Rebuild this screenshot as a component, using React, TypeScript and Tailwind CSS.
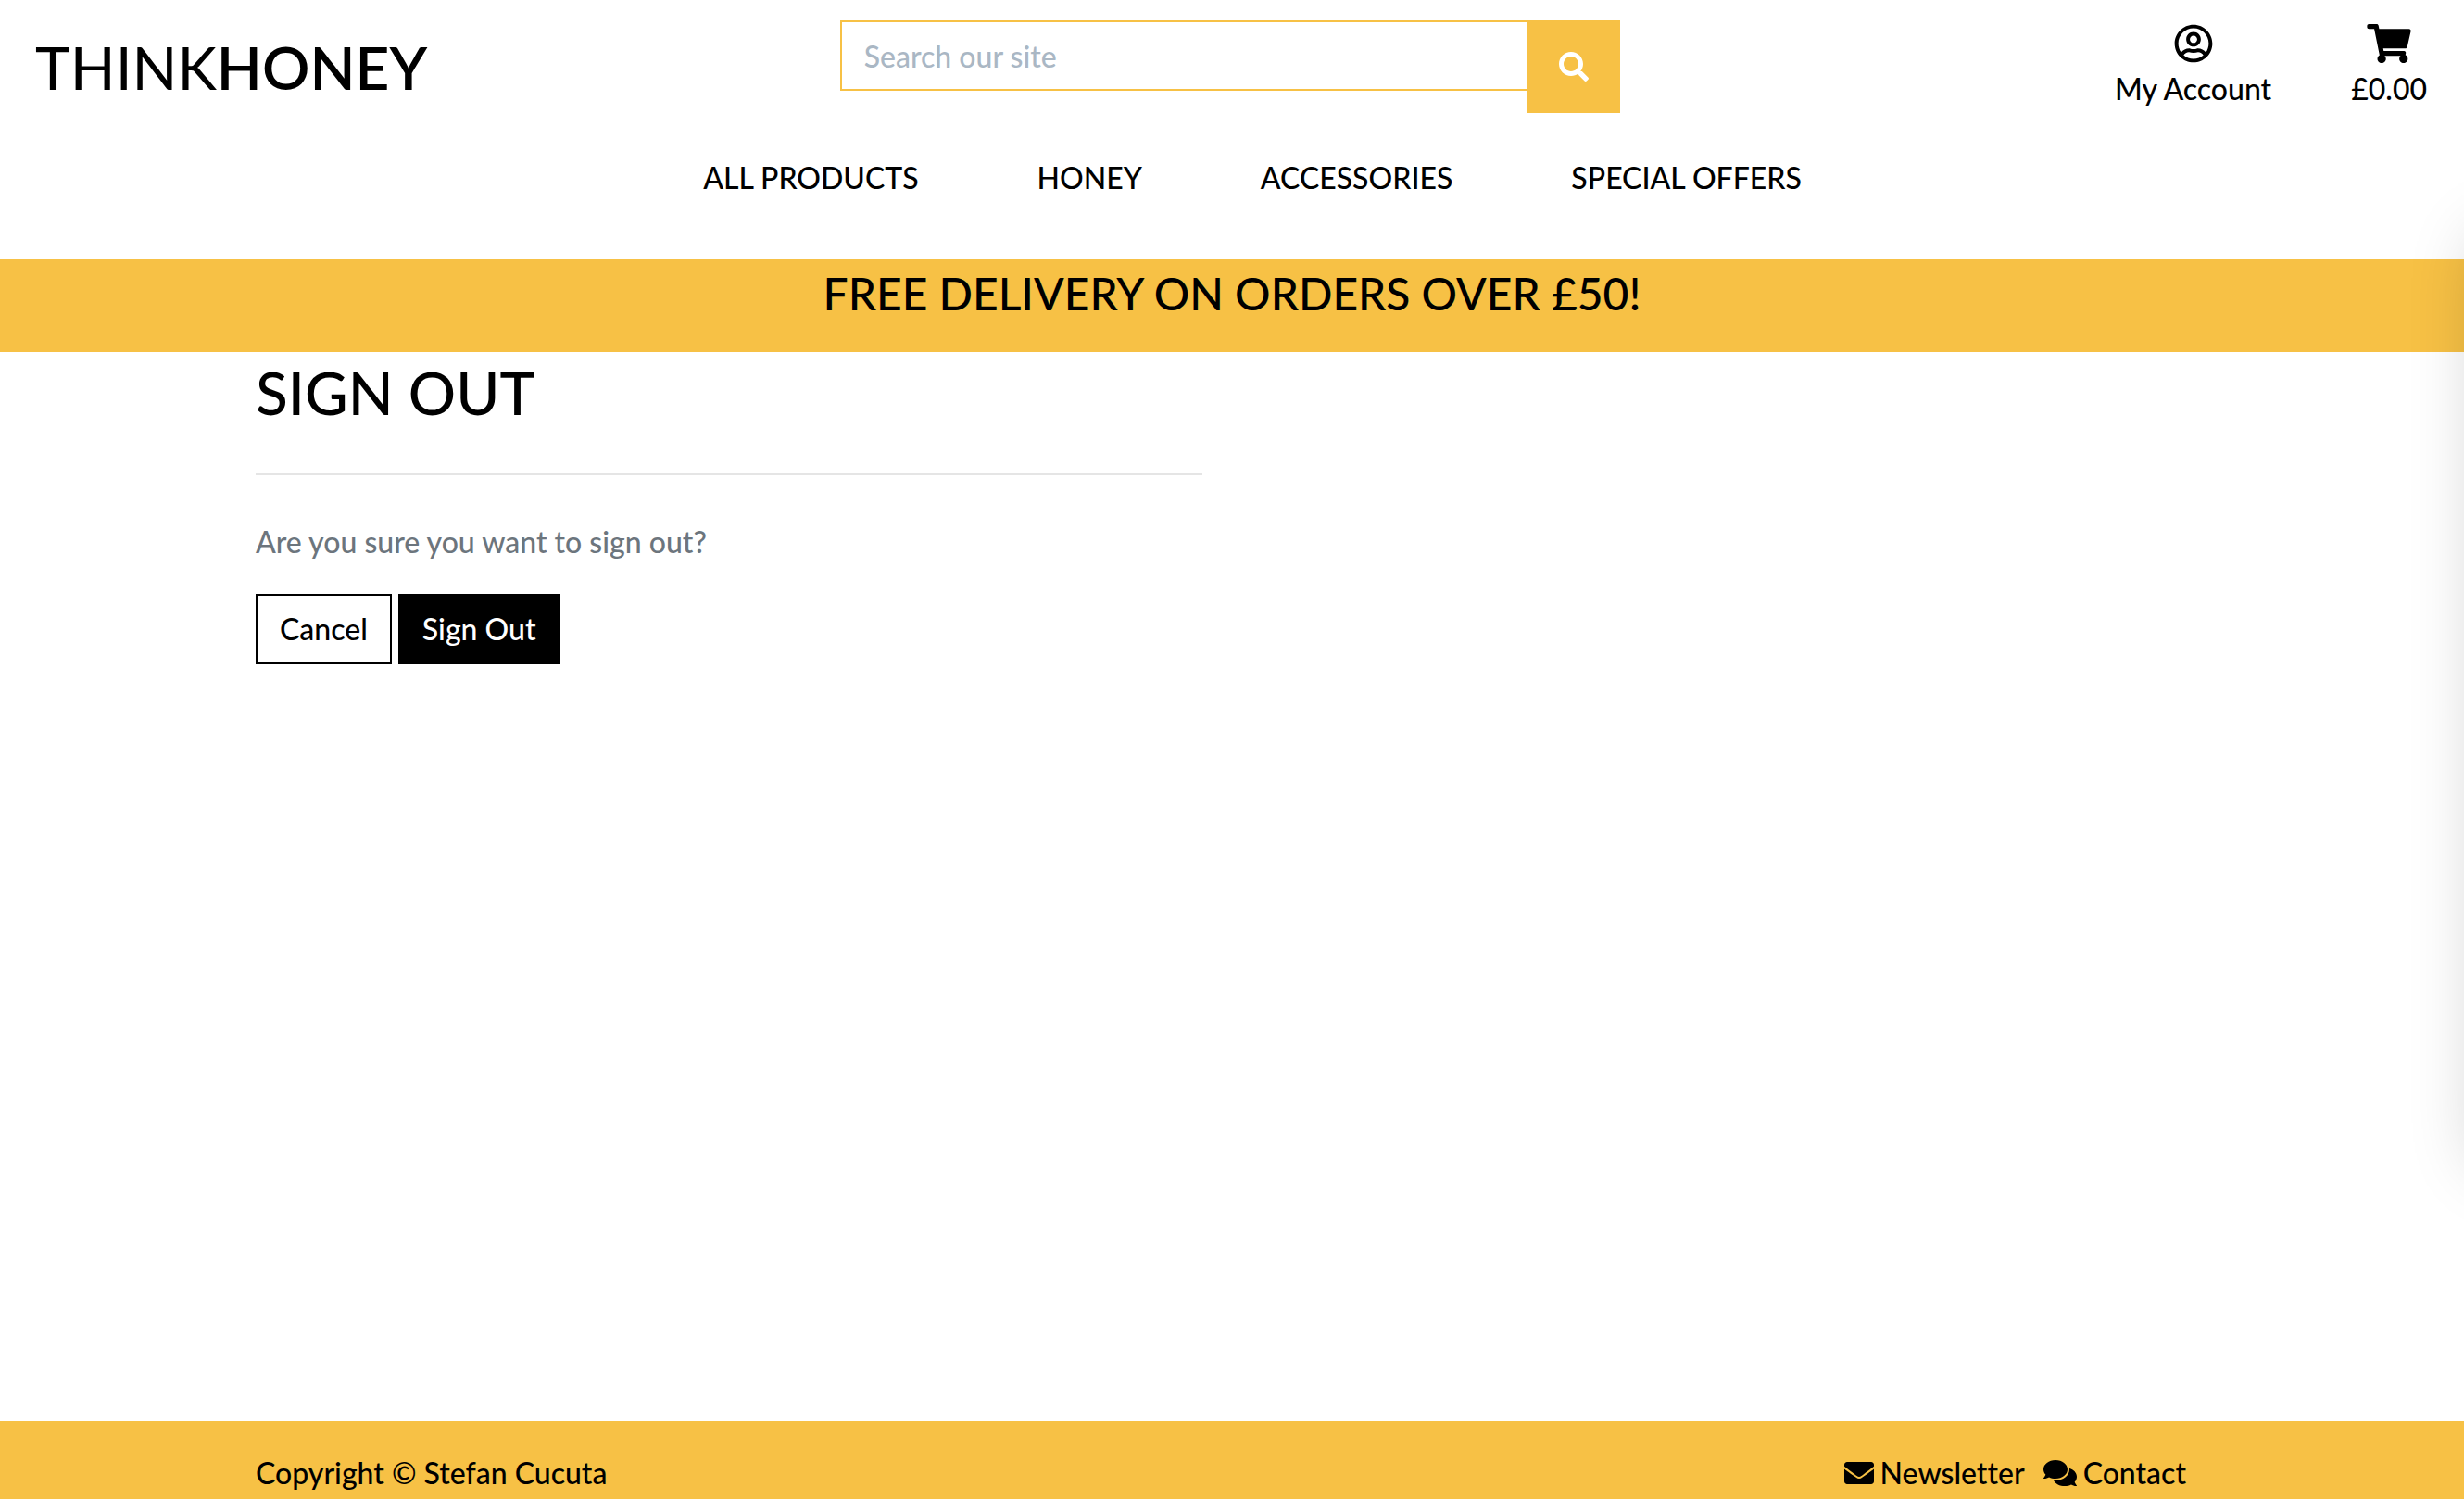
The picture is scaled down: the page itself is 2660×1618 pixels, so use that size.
import { FaEnvelope, FaComments, FaSearch, FaShoppingCart, FaRegUserCircle } from "react-icons/fa";

const links = ["ALL PRODUCTS", "HONEY", "ACCESSORIES", "SPECIAL OFFERS"];

export default function App() {
  return (
    <div className="relative flex min-h-screen flex-col overflow-hidden bg-white font-[Lato,sans-serif] text-[32px] leading-[48px] font-medium text-black [font-variant-ligatures:none]">
      <header className="pb-16">
        <div className="grid grid-cols-3 pt-[22px]">
          <a href="#" className="pl-[38px] pt-3 text-[64px] leading-[78px] font-normal">
            THINK<strong className="font-semibold">HONEY</strong>
          </a>
          <form className="flex items-start pr-6 pl-5">
            <input
              type="search"
              aria-label="Search our site"
              placeholder="Search our site"
              className="h-[76px] min-w-0 flex-1 border-2 border-r-0 border-[#f7c145] px-6 placeholder:text-[#aab7c4]"
            />
            <button type="button" aria-label="Search" className="flex size-[100px] items-center justify-center bg-[#f7c145] text-white">
              <FaSearch className="size-8" />
            </button>
          </form>
          <div className="flex justify-end gap-[86px] pr-10">
            <a href="#" className="flex flex-col items-center gap-1">
              <FaRegUserCircle className="mt-1 size-[42px]" />
              <span>My Account</span>
            </a>
            <a href="#" className="flex flex-col items-center gap-1">
              <FaShoppingCart className="mt-1 h-[42px] w-12" />
              <span>£0.00</span>
            </a>
          </div>
        </div>
        <nav className="mt-[46px] flex justify-center gap-32 pl-11">
          {links.map((label) => (
            <a key={label} href="#">
              {label}
            </a>
          ))}
        </nav>
      </header>
      <div className="bg-[#f7c145] pt-2 pb-[34px] text-center text-[48px] leading-[58px]">FREE DELIVERY ON ORDERS OVER £50!</div>
      <main className="mx-auto w-full max-w-[2140px] flex-1 px-4">
        <h1 className="pt-1.5 text-[64px] leading-[76px]">SIGN OUT</h1>
        <div className="w-1/2 pr-8">
          <hr className="mt-[49px] border-t-2 border-[#e5e5e5]" />
        </div>
        <p className="mt-12 text-[#6c757d]">Are you sure you want to sign out?</p>
        <div className="mt-8 flex gap-[7px]">
          <a href="#" className="border-2 border-black px-6 py-3">
            Cancel
          </a>
          <button type="button" className="border-2 border-black bg-black px-6 py-3 text-white">
            Sign Out
          </button>
        </div>
      </main>
      <footer className="bg-[#f7c145]">
        <div className="mx-auto flex max-w-[2140px] justify-between pt-8 pr-10 pb-1 pl-4">
          <span>Copyright © Stefan Cucuta</span>
          <span className="flex gap-5">
            <a href="#" className="flex items-center gap-[7px]">
              <FaEnvelope className="size-8" />
              Newsletter
            </a>
            <a href="#" className="flex items-center gap-[7px]">
              <FaComments className="h-8 w-9" />
              Contact
            </a>
          </span>
        </div>
      </footer>
      {/* Drawer parked beyond the right edge; only its shadow shows */}
      <div className="pointer-events-none absolute top-[254px] left-full ml-4 h-[1004px] w-[400px] shadow-[0_0_70px_rgba(0,0,0,0.2)]" />
    </div>
  );
}
